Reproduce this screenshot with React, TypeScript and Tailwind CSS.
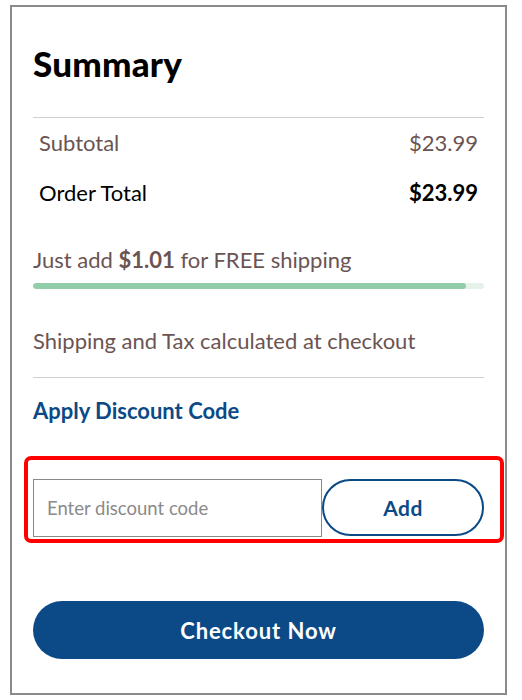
import React from "react";

export default function App() {
  const font = { fontFamily: "Lato, 'Noto Sans', sans-serif" };
  return (
    <div className="bg-white w-[522px] h-[700px] pt-[5px] pl-[10px]" style={font}>
      <div className="w-[497px] h-[690px] border-2 border-[#8a8a8a] px-[21px] flex flex-col">
        <h1 className="mt-[36px] text-[35px] leading-[40px] font-black text-black tracking-[0.2px]">Summary</h1>
        <div className="mt-[34px] h-px bg-[#d0d0d0]" />
        <div className="mt-[11px] flex justify-between items-center px-[6px] text-[22px] leading-[28px] text-[#6b5452]">
          <span>Subtotal</span>
          <span>$23.99</span>
        </div>
        <div className="mt-[22px] flex justify-between items-center px-[6px] text-[22px] leading-[28px] text-black">
          <span>Order Total</span>
          <span className="font-bold">$23.99</span>
        </div>
        <div className="mt-[39px] text-[22px] leading-[28px] text-[#6b5452]">
          Just add <span className="font-bold">$1.01</span> for FREE shipping
        </div>
        <div className="mt-[9px] h-[6px] rounded-full bg-[#e6f1e9] overflow-hidden">
          <div className="h-full rounded-full bg-[#92cda9]" style={{ width: "96%" }} />
        </div>
        <div className="mt-[38px] text-[22px] leading-[28px] text-[#6b5452]">
          Shipping and Tax calculated at checkout
        </div>
        <div className="mt-[22px] h-px bg-[#d0d0d0]" />
        <div className="mt-[19px] text-[22px] leading-[28px] font-bold text-[#0b4a86]">Apply Discount Code</div>
        <div className="mt-[31px] -ml-[9px] -mr-[20px] border-4 border-[#ff0000] rounded-[7px] pl-[5px] pr-[16px] pt-[19px] pb-[2px] flex">
          <input
            className="w-[289px] h-[58px] border border-[#8a8a8a] px-[13px] text-[18.5px] text-[#555] placeholder-[#8a8a8a] outline-none"
            style={font}
            placeholder="Enter discount code"
          />
          <button
            className="flex-1 h-[57px] rounded-full border-2 border-[#0b4a86] text-[#0b4a86] text-[21px] font-bold tracking-[0.5px]"
            style={font}
          >
            Add
          </button>
        </div>
        <button
          className="mt-[58px] h-[58px] w-full rounded-full bg-[#0b4a86] text-white text-[22px] font-bold tracking-[0.9px]"
          style={font}
        >
          Checkout Now
        </button>
      </div>
    </div>
  );
}
